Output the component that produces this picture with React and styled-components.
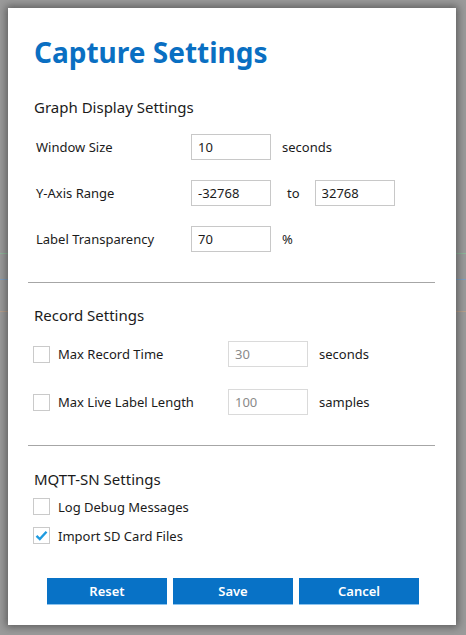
import React, { useState } from 'react';
import styled, { createGlobalStyle } from 'styled-components';

const Global = createGlobalStyle`
  html, body { margin: 0; padding: 0; }
  body {
    background: #9b9b9b;
    font-family: "Noto Sans", "Open Sans", sans-serif;
    color: #1b1b1b;
  }
`;

const Backdrop = styled.div`
  width: 466px;
  height: 635px;
  padding: 8px;
  box-sizing: border-box;
  background:
    linear-gradient(#8fb79a, #8fb79a) 0 253px / 100% 1px no-repeat,
    linear-gradient(#7f9fbf, #7f9fbf) 0 279px / 100% 1px no-repeat,
    linear-gradient(#b8a08c, #b8a08c) 0 311px / 100% 1px no-repeat,
    #9b9b9b;
`;

const Dialog = styled.div`
  width: 448px;
  height: 617px;
  background: #fff;
  box-shadow: 0 0 8px 2px rgba(40, 40, 40, 0.55);
  box-sizing: border-box;
  padding: 24px 21px 0 20px;
  display: flex;
  flex-direction: column;
`;

const Title = styled.h1`
  margin: 0 0 0 6px;
  font-size: 28px;
  line-height: 40px;
  font-weight: 700;
  color: #0a6fc2;
`;

const Section = styled.section`
  padding: ${p => p.$pad || '0'};
  display: flex;
  flex-direction: column;
`;

const Heading = styled.h2`
  margin: 0 0 0 6px;
  font-size: 15px;
  font-weight: 400;
  line-height: 20px;
  color: #1b1b1b;
`;

const Rows = styled.div`
  display: flex;
  flex-direction: column;
  gap: ${p => p.$gap}px;
  margin-top: ${p => p.$top}px;
`;

const Row = styled.div`
  display: flex;
  align-items: center;
  height: ${p => p.$h || 26}px;
  font-size: 13px;
`;

const Label = styled.span`
  box-sizing: border-box;
  width: ${p => p.$w}px;
  padding-left: ${p => p.$indent || 0}px;
  flex: none;
`;

const Field = styled.input`
  width: 80px;
  height: 26px;
  box-sizing: border-box;
  border: 1px solid ${p => (p.disabled ? '#dadada' : '#c8c8c8')};
  background: #fff;
  padding: 0 6px;
  font: inherit;
  font-size: 13px;
  color: ${p => (p.disabled ? '#8a8a8a' : '#1b1b1b')};
  outline: none;
  flex: none;
`;

const Unit = styled.span`
  margin-left: ${p => p.$gap || 11}px;
  margin-right: ${p => p.$after || 0}px;
`;

const Box = styled.span`
  width: 17px;
  height: 17px;
  box-sizing: border-box;
  border: 1px solid #cacaca;
  background: #fff;
  display: inline-flex;
  align-items: center;
  justify-content: center;
  margin: 0 8px 0 5px;
  flex: none;
`;

const Divider = styled.hr`
  margin: ${p => p.$m};
  border: 0;
  border-top: 1px solid #a6a6a6;
  height: 0;
`;

const Buttons = styled.div`
  display: flex;
  gap: 6px;
  margin: 34px 0 0 19px;
`;

const Button = styled.button`
  width: 120px;
  height: 27px;
  border: 0;
  border-bottom: 1px solid #8cc3ee;
  background: #0872c6;
  color: #fff;
  font-family: inherit;
  font-size: 13px;
  font-weight: 600;
  padding: 0;
  cursor: pointer;
`;

function Check({ checked, onToggle, children, labelWidth }) {
  return (
    <>
      <Box onClick={onToggle}>
        {checked && (
          <svg width="13" height="11" viewBox="0 0 13 11">
            <path d="M1.5 5.8 L4.8 9 L11.5 1.8" fill="none" stroke="#1e9be0" strokeWidth="2.4" />
          </svg>
        )}
      </Box>
      <Label $w={labelWidth}>{children}</Label>
    </>
  );
}

export default function App() {
  const [checks, setChecks] = useState({ maxTime: false, maxLabel: false, debug: false, sd: true });
  const toggle = k => () => setChecks(c => ({ ...c, [k]: !c[k] }));

  return (
    <Backdrop>
      <Global />
      <Dialog>
        <Title>Capture Settings</Title>

        <Section $pad="25px 0 0">
          <Heading>Graph Display Settings</Heading>
          <Rows $gap={20} $top={17}>
            <Row>
              <Label $w={163} $indent={8}>Window Size</Label>
              <Field defaultValue="10" />
              <Unit>seconds</Unit>
            </Row>
            <Row>
              <Label $w={163} $indent={8}>Y-Axis Range</Label>
              <Field defaultValue="-32768" />
              <Unit $gap={16} $after={15}>to</Unit>
              <Field defaultValue="32768" />
            </Row>
            <Row>
              <Label $w={163} $indent={8}>Label Transparency</Label>
              <Field defaultValue="70" />
              <Unit>%</Unit>
            </Row>
          </Rows>
        </Section>

        <Divider $m="30px 0 0" />

        <Section $pad="22px 0 0">
          <Heading>Record Settings</Heading>
          <Rows $gap={22} $top={16}>
            <Row>
              <Check checked={checks.maxTime} onToggle={toggle('maxTime')} labelWidth={170}>Max Record Time</Check>
              <Field defaultValue="30" disabled />
              <Unit>seconds</Unit>
            </Row>
            <Row>
              <Check checked={checks.maxLabel} onToggle={toggle('maxLabel')} labelWidth={170}>Max Live Label Length</Check>
              <Field defaultValue="100" disabled />
              <Unit>samples</Unit>
            </Row>
          </Rows>
        </Section>

        <Divider $m="30px 0 0" />

        <Section $pad="23px 0 0">
          <Heading>MQTT-SN Settings</Heading>
          <Rows $gap={12} $top={9}>
            <Row $h={17}>
              <Check checked={checks.debug} onToggle={toggle('debug')}>Log Debug Messages</Check>
            </Row>
            <Row $h={17}>
              <Check checked={checks.sd} onToggle={toggle('sd')}>Import SD Card Files</Check>
            </Row>
          </Rows>
        </Section>

        <Buttons>
          <Button>Reset</Button>
          <Button>Save</Button>
          <Button>Cancel</Button>
        </Buttons>
      </Dialog>
    </Backdrop>
  );
}
